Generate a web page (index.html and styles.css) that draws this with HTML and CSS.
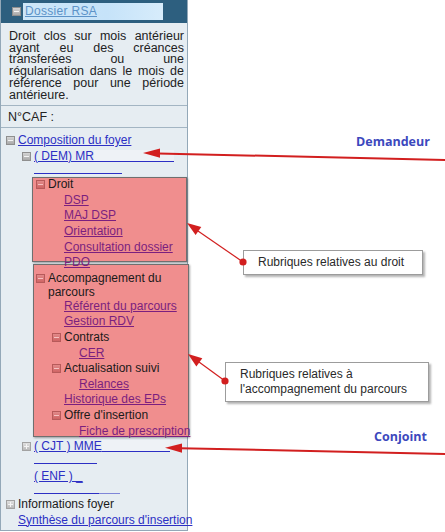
FILE: index.html
```html
<!DOCTYPE html>
<html lang="fr">
<head>
  <meta charset="UTF-8" />
  <title>Dossier RSA - menu</title>
  <link rel="stylesheet" href="styles.css">
</head>
<body>
  <div class="panel">
    <div class="head">
      <span class="ico"></span>
      <a href="#" class="head-link">Dossier RSA</a>
    </div>
    <p class="info">Droit clos sur mois antérieur ayant eu des créances transferées ou une régularisation dans le mois de référence pour une période antérieure.</p>
    <div class="caf">N°CAF :</div>

    <div class="tree">
      <div class="hl hl-droit"></div>
      <div class="hl hl-accomp"></div>

      <div class="row lv0"><span class="ico"></span><a href="#" class="lnk">Composition du foyer</a></div>
      <div class="row lv1"><span class="ico"></span><a href="#" class="lnk">( DEM) MR<span class="fill fill-dem"></span></a></div>
      <div class="name-rule rule-dem"></div>

      <div class="row lv2"><span class="ico red"></span><span>Droit</span></div>
      <div class="row lk2"><a href="#" class="lnk seen">DSP</a></div>
      <div class="row lk2"><a href="#" class="lnk seen">MAJ DSP</a></div>
      <div class="row lk2"><a href="#" class="lnk seen">Orientation</a></div>
      <div class="row lk2"><a href="#" class="lnk seen">Consultation dossier</a></div>
      <div class="row lk2"><a href="#" class="lnk seen">PDO</a></div>

      <div class="row lv2 wrap"><span class="ico red"></span><span>Accompagnement du parcours</span></div>
      <div class="row lk2"><a href="#" class="lnk seen">Référent du parcours</a></div>
      <div class="row lk2"><a href="#" class="lnk seen">Gestion RDV</a></div>
      <div class="row lv3"><span class="ico red"></span><span>Contrats</span></div>
      <div class="row lk3"><a href="#" class="lnk seen">CER</a></div>
      <div class="row lv3"><span class="ico red"></span><span>Actualisation suivi</span></div>
      <div class="row lk3"><a href="#" class="lnk seen">Relances</a></div>
      <div class="row lk2"><a href="#" class="lnk seen">Historique des EPs</a></div>
      <div class="row lv3"><span class="ico red"></span><span>Offre d'insertion</span></div>
      <div class="row lk3"><a href="#" class="lnk seen">Fiche de prescription</a></div>

      <div class="row lv1"><span class="ico plus"></span><a href="#" class="lnk">( CJT ) MME<span class="fill fill-cjt"></span></a></div>
      <div class="name-rule rule-cjt"></div>
      <div class="row lk1"><a href="#" class="lnk">( ENF ) _</a></div>
      <div class="name-rule rule-enf"></div>

      <div class="row lv0"><span class="ico plus"></span><span>Informations foyer</span></div>
      <div class="row lk0"><a href="#" class="lnk">Synthèse du parcours d'insertion</a></div>
    </div>
  </div>

  <!-- annotations -->
  <div class="tag tag-dem">Demandeur</div>
  <div class="tag tag-cjt">Conjoint</div>
  <div class="callout call-droit">Rubriques relatives au droit</div>
  <div class="callout call-accomp">Rubriques relatives à<br>l'accompagnement du parcours</div>

  <svg class="arrows" width="445" height="532" viewBox="0 0 445 532">
    <g stroke="#d21f1f" fill="none">
      <line x1="445" y1="160" x2="158" y2="153.4" stroke-width="2" />
      <line x1="445" y1="454" x2="180" y2="448.2" stroke-width="2" />
      <line x1="243" y1="262" x2="198" y2="231" stroke-width="1.2" />
      <line x1="225" y1="381" x2="199" y2="362" stroke-width="1.2" />
    </g>
    <g fill="#d21f1f">
      <polygon points="143,153 160,148.6 160,157.8" />
      <polygon points="165,447.8 182,443.5 182,452.7" />
      <polygon points="187,223 201.3,226.9 195.6,235.1" />
      <polygon points="188,354 202.3,358.2 196.4,366.4" />
      <circle cx="243" cy="262" r="3.6" />
      <circle cx="225" cy="381" r="3.6" />
    </g>
  </svg>
</body>
</html>
```

FILE: styles.css
```css
* {
  box-sizing: border-box;
  margin: 0;
  padding: 0;
}
body {
  position: relative;
  width: 445px;
  height: 532px;
  background: #fff;
  font-family: 'Liberation Sans', Arial, sans-serif;
  font-size: 12px;
  color: #1a1a1a;
  overflow: hidden;
}

/* left menu */
.panel {
  position: relative;
  width: 188px;
  height: 531px;
  background: #e6edf2;
  border: 1px solid #93a8b8;
  border-top: none;
}
.head {
  height: 23px;
  background: #2d5f7f;
  display: flex;
  align-items: center;
  padding-left: 11px;
}
.head .ico {
  margin-right: 2px;
}
.head-link {
  display: block;
  width: 140px;
  height: 17px;
  line-height: 17px;
  padding-left: 2px;
  background: linear-gradient(90deg, #cde6f8 0%, #c6e3f9 60%, #d7ecfb 100%);
  color: #5d93c8;
  font-size: 12px;
  letter-spacing: 0.3px;
}
.info {
  padding: 8px 3px 4px 8px;
  font-size: 12.5px;
  line-height: 11.7px;
  text-align: justify;
  color: #222;
  border-bottom: 1px solid #a3b5c3;
  height: 83px;
}
.caf {
  height: 22px;
  line-height: 23px;
  padding-left: 7px;
  font-size: 12.5px;
  color: #222;
  border-bottom: 1px solid #a3b5c3;
}

/* tree */
.tree {
  position: relative;
  padding-top: 5px;
}
.row {
  position: relative;
  z-index: 1;
  display: flex;
  align-items: center;
  height: 15.6px;
  line-height: 15.6px;
  white-space: nowrap;
}
.row.wrap {
  height: 28px;
  line-height: 14px;
  align-items: flex-start;
  white-space: normal;
  padding-right: 20px;
}
.row.wrap .ico {
  margin-top: 3px;
}
.lv0 { padding-left: 5px; }
.lk0 { padding-left: 17px; }
.lv1 { padding-left: 21px; }
.lk1 { padding-left: 33px; }
.lv2 { padding-left: 35px; }
.lk2 { padding-left: 63px; }
.lv3 { padding-left: 51px; }
.lk3 { padding-left: 78px; }

.ico {
  flex: none;
  position: relative;
  display: inline-block;
  width: 9px;
  height: 9px;
  margin-right: 3px;
  border: 1px solid #8f8f8f;
  background: linear-gradient(#d4d4d4, #a9a9a9);
}
.ico::after {
  content: "";
  position: absolute;
  left: 1px;
  right: 1px;
  top: 3px;
  height: 1px;
  background: #f4f4f4;
}
.ico.plus {
  background: linear-gradient(#e0e0e0, #b9b9b9);
  border-color: #a2a2a2;
}
.ico.plus::before {
  content: "";
  position: absolute;
  top: 1px;
  bottom: 1px;
  left: 3px;
  width: 1px;
  background: #f4f4f4;
}
.ico.red {
  border-color: #b75a5a;
  background: linear-gradient(#e28a8a, #cf6464);
}
.ico.red::after {
  background: #f6c2c2;
}

.lnk {
  color: #2c2fc4;
  text-decoration: underline;
}
.lnk.seen {
  color: #7b1f7f;
}
.fill {
  display: inline-block;
  vertical-align: baseline;
  margin-bottom: -2px;
  border-bottom: 1px solid #2c2fc4;
  background: #eef2f6;
  height: 12px;
}
.fill-dem { width: 80px; }
.fill-cjt { width: 68px; }

.name-rule {
  border-bottom: 1px solid #2c2fc4;
  margin-left: 33px;
}
.rule-dem { width: 88px; height: 10px; margin-bottom: 3px; }
.rule-cjt { width: 63px; height: 9px; margin-bottom: 5.4px; }
.rule-enf {
  width: 86px;
  height: 9px;
  margin-bottom: 3.4px;
  border-image: linear-gradient(90deg, #2c2fc4 75%, #7f86d8 75%) 1;
}

/* pink highlight rectangles (annotation) */
.hl {
  position: absolute;
  z-index: 0;
  background: #f08e8e;
  border: 1px solid #6f6f6f;
  box-shadow: 1px 1px 2px rgba(0, 0, 0, 0.35);
}
.hl-droit {
  left: 31px;
  top: 49px;
  width: 155px;
  height: 85px;
}
.hl-accomp {
  left: 32px;
  top: 136px;
  width: 156px;
  height: 173px;
}

/* right-side annotations */
.tag {
  position: absolute;
  font-family: 'Open Sans', 'Liberation Sans', sans-serif;
  font-weight: 700;
  font-size: 12.5px;
  color: #3c48bd;
}
.tag-dem { left: 356px; top: 133px; }
.tag-cjt { left: 374px; top: 428px; }

.callout {
  position: absolute;
  background: #fff;
  border: 1px solid #9c9c9c;
  box-shadow: 2px 2px 2px rgba(0, 0, 0, 0.3);
  color: #2a2a2a;
  font-size: 12px;
  line-height: 15px;
}
.call-droit {
  left: 243px;
  top: 250px;
  width: 180px;
  height: 25px;
  padding: 4px 0 0 14px;
}
.call-accomp {
  left: 225px;
  top: 362px;
  width: 204px;
  height: 40px;
  padding: 4px 0 0 14px;
}

.arrows {
  position: absolute;
  left: 0;
  top: 0;
  z-index: 3;
  pointer-events: none;
}
```
